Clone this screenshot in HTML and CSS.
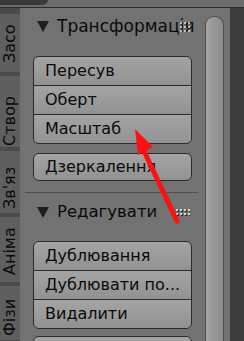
FILE: index.html
```html
<!DOCTYPE html>
<html lang="uk">
<head>
<meta charset="UTF-8" />
<meta name="viewport" content="width=device-width, initial-scale=1.0"/>
<title>Панель інструментів</title>
<link rel="stylesheet" href="styles.css">
</head>
<body>
<div class="top">
    <div class="top-btn"></div>
</div>
<div class="area">
    <nav class="tabs">
        <div class="tab">Засо</div>
        <div class="tab">Створ</div>
        <div class="tab">Зв'яз</div>
        <div class="tab">Аніма</div>
        <div class="tab">Фізи</div>
    </nav>
    <main class="panel">
        <div class="head first">
            <svg class="tri" width="12" height="11" viewBox="0 0 12 11"><polygon points="0,0 12,0 6,11" fill="#1e1e1e"/></svg>
            <span>Трансформація</span>
            <svg class="grip" width="10" height="10" viewBox="0 0 10 10">
                <g fill="#2a2a2a" opacity="0.6">
                    <rect x="1" y="1" width="2" height="2"/><rect x="5" y="1" width="2" height="2"/><rect x="9" y="1" width="1" height="2"/>
                    <rect x="1" y="5" width="2" height="2"/><rect x="5" y="5" width="2" height="2"/><rect x="9" y="5" width="1" height="2"/>
                    <rect x="1" y="9" width="2" height="1"/><rect x="5" y="9" width="2" height="1"/>
                </g>
                <g fill="#d8d8d8" opacity="0.8">
                    <rect x="0" y="0" width="2" height="2"/><rect x="4" y="0" width="2" height="2"/><rect x="8" y="0" width="2" height="2"/>
                    <rect x="0" y="4" width="2" height="2"/><rect x="4" y="4" width="2" height="2"/><rect x="8" y="4" width="2" height="2"/>
                    <rect x="0" y="8" width="2" height="2"/><rect x="4" y="8" width="2" height="2"/><rect x="8" y="8" width="2" height="2"/>
                </g>
            </svg>
        </div>
        <div class="group">
            <div class="btn">Пересув</div>
            <div class="btn">Оберт</div>
            <div class="btn">Масштаб</div>
        </div>
        <div class="group single">
            <div class="btn">Дзеркалення</div>
        </div>
        <div class="sep"></div>
        <div class="head">
            <svg class="tri" width="12" height="11" viewBox="0 0 12 11"><polygon points="0,0 12,0 6,11" fill="#1e1e1e"/></svg>
            <span>Редагувати</span>
            <svg class="grip" width="14" height="8" viewBox="0 0 14 8">
                <g fill="#2a2a2a">
                    <rect x="1" y="1" width="2" height="2"/><rect x="5" y="1" width="2" height="2"/><rect x="9" y="1" width="2" height="2"/><rect x="13" y="1" width="1" height="2"/>
                    <rect x="1" y="5" width="2" height="2"/><rect x="5" y="5" width="2" height="2"/><rect x="9" y="5" width="2" height="2"/><rect x="13" y="5" width="1" height="2"/>
                </g>
                <g fill="#d8d8d8">
                    <rect x="0" y="0" width="2" height="2"/><rect x="4" y="0" width="2" height="2"/><rect x="8" y="0" width="2" height="2"/><rect x="12" y="0" width="2" height="2"/>
                    <rect x="0" y="4" width="2" height="2"/><rect x="4" y="4" width="2" height="2"/><rect x="8" y="4" width="2" height="2"/><rect x="12" y="4" width="2" height="2"/>
                </g>
            </svg>
        </div>
        <div class="group tight">
            <div class="btn">Дублювання</div>
            <div class="btn">Дублювати по...</div>
            <div class="btn">Видалити</div>
        </div>
        <div class="group">
            <div class="btn"></div>
        </div>
    </main>
    <div class="scroll">
        <div class="thumb"></div>
    </div>
    <div class="edge"></div>
</div>

<!-- червона стрілка-підказка -->
<svg class="arrow" width="244" height="341" viewBox="0 0 244 341">
    <line x1="177" y1="221" x2="143" y2="149" stroke="#ff1010" stroke-width="5" stroke-linecap="round"/>
    <polygon points="135,129 138,155 153,147" fill="#ff1010"/>
</svg>
</body>
</html>
```

FILE: styles.css
```css
body {
    margin: 0;
    width: 244px;
    height: 341px;
    overflow: hidden;
    background: #727272;
    font-family: "DejaVu Sans", sans-serif;
    font-size: 16px;
    color: #0a0a0a;
    position: relative;
}
.top {
    height: 7px;
    border-bottom: 1px solid #2c2c2c;
    background: #6c6c6c;
}
.top-btn {
    width: 48px;
    height: 5px;
    background: #3a3a3a;
    border-radius: 0 0 6px 0;
}
.area {
    display: flex;
    height: 333px;
    overflow: hidden;
}
.tabs {
    width: 20px;
    background: #4b4b4b;
    padding-top: 6px;
    display: flex;
    flex-direction: column;
    gap: 4px;
    overflow: hidden;
}
.tab {
    background: #5f5f5f;
    writing-mode: vertical-rl;
    transform: rotate(180deg);
    line-height: 20px;
    white-space: nowrap;
    overflow: hidden;
    flex-shrink: 0;
}
/* висота кожної вкладки */
.tab:nth-child(1) {height: 49px; padding-top: 9px;}
.tab:nth-child(2) {height: 70px; padding-top: 1px;}
.tab:nth-child(3) {height: 58px; padding-top: 4px;}
.tab:nth-child(4) {height: 58px; padding-top: 7px;}
.tab:nth-child(5) {height: 50px; padding-top: 4px;}

.panel {
    flex: 1;
    padding: 0 13px;
    overflow: hidden;
}
.head {
    position: relative;
    display: flex;
    align-items: center;
    height: 18px;
    line-height: 18px;
    font-size: 16.5px;
    margin: 10px 0 20px 4px;
    white-space: nowrap;
}
.head.first {
    font-size: 17px;
    margin-top: 9px;
    margin-bottom: 21px;
}
.tri {
    margin-right: 8px;
    flex-shrink: 0;
}
.grip {
    position: absolute;
    right: 2px;
    top: 6px;
}
.head.first .grip {
    top: 5px;
}
.group {
    border: 1px solid #2a2a2a;
    border-radius: 6px;
    overflow: hidden;
    margin-bottom: 9px;
}
.group.tight {
    margin-bottom: 7px;
}
.btn {
    height: 28px;
    line-height: 28px;
    padding-left: 11px;
    background: linear-gradient(#a4a4a4, #929292);
    white-space: nowrap;
}
.btn + .btn {
    border-top: 1px solid #2a2a2a;
}
.group.single .btn {
    height: 26px;
    line-height: 26px;
}
.group.single {
    margin-bottom: 11px;
}
.sep {
    border-top: 1px solid #4e4e4e;
    margin: 0 -6px 0 -8px;
}
.scroll {
    width: 25px;
    padding-top: 8px;
    display: flex;
}
.thumb {
    width: 17px;
    border: 1px solid #4c4c4c;
    border-bottom: none;
    border-radius: 9px 9px 0 0;
    background: linear-gradient(to right, #a6a6a6, #979797 40%, #8c8c8c);
}
.edge {
    width: 14px;
    background: #3d3d3d;
}
.arrow {
    position: absolute;
    left: 0;
    top: 0;
    pointer-events: none;
}
```
